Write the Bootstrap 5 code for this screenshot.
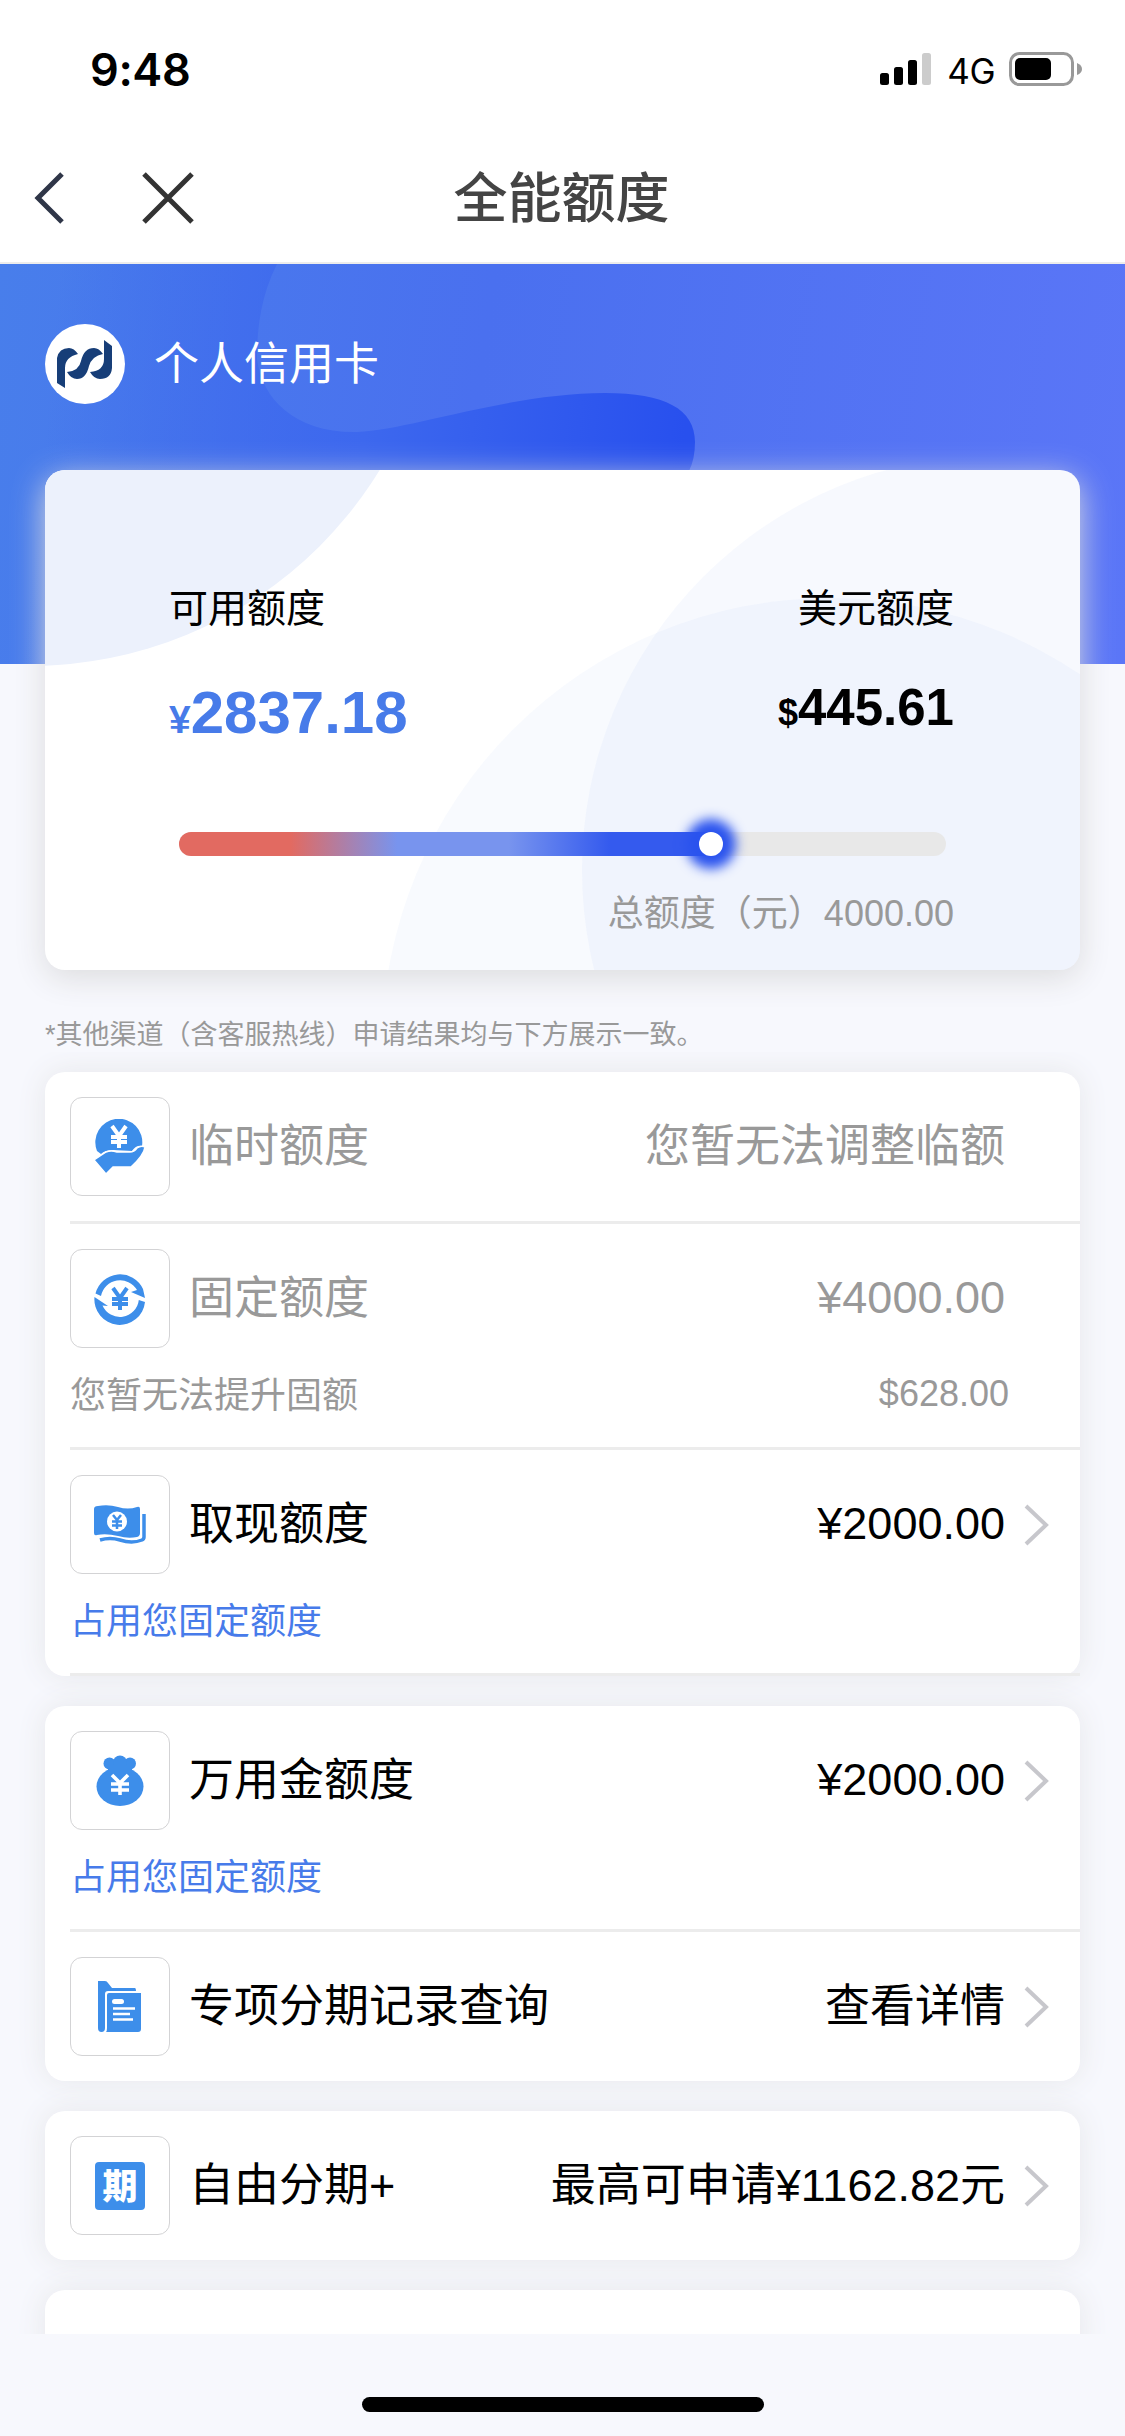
<!DOCTYPE html>
<html lang="zh-CN">
<head>
<meta charset="utf-8">
<meta name="viewport" content="width=device-width, initial-scale=1">
<title>全能额度</title>
<link href="https://cdn.jsdelivr.net/npm/bootstrap@5.3.0/dist/css/bootstrap.min.css" rel="stylesheet">
<style>
  html, body { margin: 0; }
  body { width: 1125px; height: 2436px; overflow: hidden; background: #f7f8fd; color: #000; font-family: "Liberation Sans", "Noto Sans CJK SC", sans-serif; font-size: 45px; line-height: 1; }
  svg { display: block; flex: none; }
  .status-bar { height: 132px; padding: 6px 43px 0 90px; font-family: Inter, sans-serif; }
  .clock { font-size: 45px; font-weight: 600; letter-spacing: -.4px; }
  .net { font-size: 35px; font-weight: 400; margin: 4px 14px 0 15px; letter-spacing: -.5px; }
  .title-bar { height: 132px; border-bottom: 2px solid #ececec; display: grid; grid-template-columns: 1fr auto 1fr; padding-top: 1px; }
  .page-title { font-size: 54px; font-weight: 500; color: #444; padding: 3px 2px 0 0; }
  .hero { height: 400px; position: relative; background: linear-gradient(98deg, #487eeb 0%, #4a70ef 42%, #5b76f7 100%); }
  .hero-art { position: absolute; inset: 0; }
  .hero-head { position: relative; padding: 60px 45px 0; gap: 29px; color: #fff; }
  .limit-card { position: relative; margin: -194px 45px 0; height: 500px; border-radius: 20px; background: #fff; box-shadow: 0 8px 32px #dcdcde; }
  .limit-art { position: absolute; inset: 0; border-radius: 20px; }
  .limit-body { position: relative; padding: 118px 126px 0 124px; height: 100%; }
  .limit-name { font-size: 39px; line-height: 42px; }
  .amount-cny { font-size: 60px; font-weight: 700; color: #477be9; line-height: 60px; margin-top: 53px; }
  .amount-usd { font-size: 51px; font-weight: 700; line-height: 60px; margin-top: 48px; }
  .sign-cny { font-size: 39px; } .sign-usd { font-size: 36px; }
  .track { height: 24px; border-radius: 12px; background: #e8e8e8; margin: 82px 8px 0 10px; position: relative; }
  .track-fill { height: 24px; border-radius: 12px 0 0 12px; background: linear-gradient(90deg, #e26a61 21%, #7894ee 41%, #7894ee 62%, #345aee 81%); }
  .knob { position: absolute; top: 0; width: 24px; height: 24px; margin-left: -12px; border-radius: 50%; background: #fff; box-shadow: 0 0 12px 13px #2a53ee; }
  .total { margin-top: 38px; }
  .gray { color: #999; }
  .f36 { font-size: 36px; line-height: 40px; }
  .hint { font-size: 27px; line-height: 36px; color: #999; padding: 47px 45px 19px; }
  .panel { margin: 0 45px 30px; background: #fff; border-radius: 20px; box-shadow: 0 0 30px #e6e7ea; padding-left: 25px; position: relative; }
  .entry { padding: 25px 0; }
  .entry.has-sub { padding-bottom: 0; }
  .entry + .entry { border-top: 3px solid #ececec; }
  .line-main { height: 99px; padding-right: 30px; }
  .icon-box { width: 100px; height: 99px; border: 1px solid #d3d3d5; border-radius: 12px; margin-right: 19px; flex: none; }
  .arrow { margin-left: 18px; }
  .no-arrow { margin-right: 45px; }
  .digits { padding-bottom: 3px; }
  .sub-line { height: 99px; padding: 0 71px 4px 0; }
  .sub-line .digits { padding-bottom: 4px; }
  .blue { color: #477bea; }
  .list-area { height: 1282px; overflow: hidden; margin-top: -20px; padding-top: 20px; }
  .home-bar { width: 402px; height: 15px; border-radius: 8px; background: #000; margin: 63px auto 0; }
</style>
</head>
<body>
<header class="bg-white">
  <div class="status-bar d-flex align-items-center justify-content-between">
    <span class="clock">9:48</span>
    <div class="d-flex align-items-center">
      <svg width="52" height="34" viewBox="0 0 52 34"><rect x="0" y="21" width="9" height="12" rx="2.5"/><rect x="14" y="15" width="9" height="18" rx="2.5"/><rect x="28" y="8" width="9" height="25" rx="2.5"/><rect x="42" y="1" width="9" height="32" rx="2.5" fill="#ccc"/></svg>
      <span class="net">4G</span>
      <svg width="73" height="34" viewBox="0 0 73 34"><rect x="1.5" y="1.5" width="62" height="31" rx="9" fill="none" stroke="#999" stroke-width="3"/><rect x="6" y="6" width="36" height="22" rx="5"/><path d="M68 11q5 2 5 6t-5 6z" fill="#999"/></svg>
    </div>
  </div>
  <div class="title-bar align-items-center">
    <div class="d-flex align-items-center">
      <svg width="66" height="52" viewBox="0 0 66 52" fill="none" stroke="#2f3648" stroke-width="5"><path d="M62 2 38 26l24 24"/></svg>
      <svg style="margin-left:76px" width="52" height="52" viewBox="0 0 52 52" fill="none" stroke="#333" stroke-width="5"><path d="M2 2l48 48M50 2 2 50"/></svg>
    </div>
    <span class="page-title">全能额度</span>
    <span></span>
  </div>
</header>

<section class="hero">
  <svg class="hero-art" width="1125" height="400" viewBox="0 0 1125 400">
    <defs>
      <linearGradient id="wave" gradientUnits="userSpaceOnUse" x1="60" y1="0" x2="695" y2="60"><stop offset="0" stop-color="#3a67ec" stop-opacity="0"/><stop offset=".5" stop-color="#3d68ee"/><stop offset="1" stop-color="#2850ee"/></linearGradient>
    </defs>
    <path fill="url(#wave)" d="M60 0H277C262 30 257 60 257 95C262 135 295 169 357 168C410 166 510 129 605 129C665 129 695 145 695 178Q695 195 689 207V400H0V0z"/>
  </svg>
  <div class="hero-head d-flex align-items-center">
    <svg width="80" height="80" viewBox="0 0 80 80"><circle cx="40" cy="40" r="40" fill="#fff"/><g fill="#173e78"><path d="M12 34Q14 24 24 24Q29 24 33 30Q20 33 20 44V64L12 59z"/><path d="M22 48Q34 47 36 37Q39 24 49 24Q54 24 58 30Q47 32 44 42Q41 55 32 55Q26 55 22 48z"/><path d="M59 16L67 22V44Q66 55 55 55Q49 55 45 48Q59 47 59 35z"/></g></svg>
    <span>个人信用卡</span>
  </div>
</section>

<section class="limit-card">
  <svg class="limit-art" width="1035" height="500" viewBox="45 470 1035 500"><circle cx="30" cy="256" r="410" fill="#ecf1fc"/><circle cx="997" cy="870" r="415" fill="#4078e0" fill-opacity=".045"/><circle cx="830" cy="1046" r="448" fill="#4078e0" fill-opacity=".035"/></svg>
  <div class="limit-body">
    <div class="d-flex justify-content-between">
      <div><div class="limit-name">可用额度</div><div class="amount-cny"><span class="sign-cny">¥</span>2837.18</div></div>
      <div class="text-end"><div class="limit-name">美元额度</div><div class="amount-usd"><span class="sign-usd">$</span>445.61</div></div>
    </div>
    <div class="track"><div class="track-fill" style="width:69.4%"></div><span class="knob" style="left:69.4%"></span></div>
    <div class="total gray f36 text-end">总额度（元）4000.00</div>
  </div>
</section>

<div class="hint">*其他渠道（含客服热线）申请结果均与下方展示一致。</div>

<main class="list-area">
  <section class="panel">
    <div class="entry">
      <div class="line-main d-flex align-items-center gray">
        <span class="icon-box d-flex align-items-center justify-content-center"><svg width="54" height="56" viewBox="0 0 54 56"><path fill="#3d8eea" d="M4 32A23.500 23.500 0 1 1 49 27Q43 26 39 32L20 31Q12 31 8 35z"/><path fill="#3d8eea" stroke="#fff" stroke-width="1.500" d="M1 41L13 33Q18 31 24 33H37Q41 33 44 29Q48 26 52 28Q51 36 38 48H20L13 55z"/><path d="M19 7l7 10 7-10M18 18h16M18 23h16M26 17v12" fill="none" stroke="#fff" stroke-width="4"/></svg></span>
        <span>临时额度</span><span class="ms-auto no-arrow">您暂无法调整临额</span>
      </div>
    </div>
    <div class="entry has-sub">
      <div class="line-main d-flex align-items-center gray">
        <span class="icon-box d-flex align-items-center justify-content-center"><svg width="52" height="54" viewBox="0 0 52 54"><path fill="#3d8eea" d="M1.500 21.500A25.300 25.300 0 0 1 49 17L51 26L37 20L43 18A19.500 19.500 0 0 0 7 24zM.5 25L14 34L8.500 33.500A19 19 0 0 0 44.800 28L51 30A25.300 25.300 0 0 1 .5 25z"/><path d="M19 16l7 10 7-10M18 27h16M18 32h16M26 26v12" fill="none" stroke="#3d8eea" stroke-width="4"/></svg></span>
        <span>固定额度</span><span class="ms-auto no-arrow digits">¥4000.00</span>
      </div>
      <div class="sub-line d-flex align-items-center justify-content-between gray f36"><span>您暂无法提升固额</span><span class="digits">$628.00</span></div>
    </div>
    <div class="entry has-sub">
      <div class="line-main d-flex align-items-center">
        <span class="icon-box d-flex align-items-center justify-content-center"><svg width="52" height="40" viewBox="0 0 52 40"><path fill="#3d8eea" d="M0 4Q0 1 4 1Q14-1 24 2Q34 5 43 2Q46 1 46 4V28Q46 31 43 32Q34 34 24 31Q12 28 3 30Q0 31 0 28z"/><path d="M6 35Q16 32 26 35Q38 39 48 35Q50 34 50 32V9" fill="none" stroke="#3d8eea" stroke-width="3.500"/><circle cx="23" cy="16.500" r="10" fill="#fff"/><path d="M19 10l4 5 4-5M18 16.500h10M18 20.500h10M23 15v9" fill="none" stroke="#3d8eea" stroke-width="2.500"/></svg></span>
        <span>取现额度</span><span class="ms-auto digits">¥2000.00</span>
        <svg class="arrow" width="27" height="42" viewBox="0 0 27 42" fill="none" stroke="#c7c7cc" stroke-width="4"><path d="M3 2l20 19L3 40"/></svg>
      </div>
      <div class="sub-line d-flex align-items-center f36 blue"><span>占用您固定额度</span></div>
    </div>
    <div class="entry p-0"></div>
  </section>

  <section class="panel">
    <div class="entry has-sub">
      <div class="line-main d-flex align-items-center">
        <span class="icon-box d-flex align-items-center justify-content-center"><svg width="48" height="52" viewBox="0 0 48 52"><g fill="#3d8eea"><ellipse cx="24" cy="31.500" rx="23.500" ry="19.500"/><circle cx="13.500" cy="8.500" r="6"/><circle cx="34" cy="8.500" r="6"/><circle cx="24" cy="7.500" r="7"/><path d="M12 10H36V16L42 19H6L12 16z"/></g><path d="M16 20l8 8 8-8M15 29h18M15 35h18M24 27v13" fill="none" stroke="#fff" stroke-width="3.600"/></svg></span>
        <span>万用金额度</span><span class="ms-auto digits">¥2000.00</span>
        <svg class="arrow" width="27" height="42" viewBox="0 0 27 42" fill="none" stroke="#c7c7cc" stroke-width="4"><path d="M3 2l20 19L3 40"/></svg>
      </div>
      <div class="sub-line d-flex align-items-center f36 blue"><span>占用您固定额度</span></div>
    </div>
    <div class="entry">
      <div class="line-main d-flex align-items-center">
        <span class="icon-box d-flex align-items-center justify-content-center"><svg width="44" height="52" viewBox="0 0 44 52"><path fill="#3d8eea" d="M0 0H7Q9 0 10 2L14 7H37Q38 7 38 10H10Q7 10 7 13V47Q7 51 3.500 51Q0 51 0 47z"/><path fill="#3d8eea" d="M9 14Q9 12 11 12H43V48Q43 51 40 51H8Q9 50 9 47z"/><path d="M16.500 20.500h7" stroke="#fff" stroke-width="5" stroke-linecap="round"/><path d="M15 27.500h22M15 33h17M15 38.500h20" stroke="#fff" stroke-width="2.600"/></svg></span>
        <span>专项分期记录查询</span><span class="ms-auto">查看详情</span>
        <svg class="arrow" width="27" height="42" viewBox="0 0 27 42" fill="none" stroke="#c7c7cc" stroke-width="4"><path d="M3 2l20 19L3 40"/></svg>
      </div>
    </div>
  </section>

  <section class="panel">
    <div class="entry">
      <div class="line-main d-flex align-items-center">
        <span class="icon-box d-flex align-items-center justify-content-center"><svg width="50" height="50" viewBox="0 0 50 50"><rect y="1" width="50" height="48" rx="4" fill="#3d8eea"/><text x="25" y="38" font-size="35" font-weight="900" fill="#fff" text-anchor="middle">期</text></svg></span>
        <span>自由分期+</span><span class="ms-auto">最高可申请¥1162.82元</span>
        <svg class="arrow" width="27" height="42" viewBox="0 0 27 42" fill="none" stroke="#c7c7cc" stroke-width="4"><path d="M3 2l20 19L3 40"/></svg>
      </div>
    </div>
  </section>

  <section class="panel"><div class="entry"><div class="line-main"></div></div></section>
</main>
<div class="home-bar"></div>
<script src="https://cdn.jsdelivr.net/npm/bootstrap@5.3.0/dist/js/bootstrap.bundle.min.js"></script>
</body>
</html>
